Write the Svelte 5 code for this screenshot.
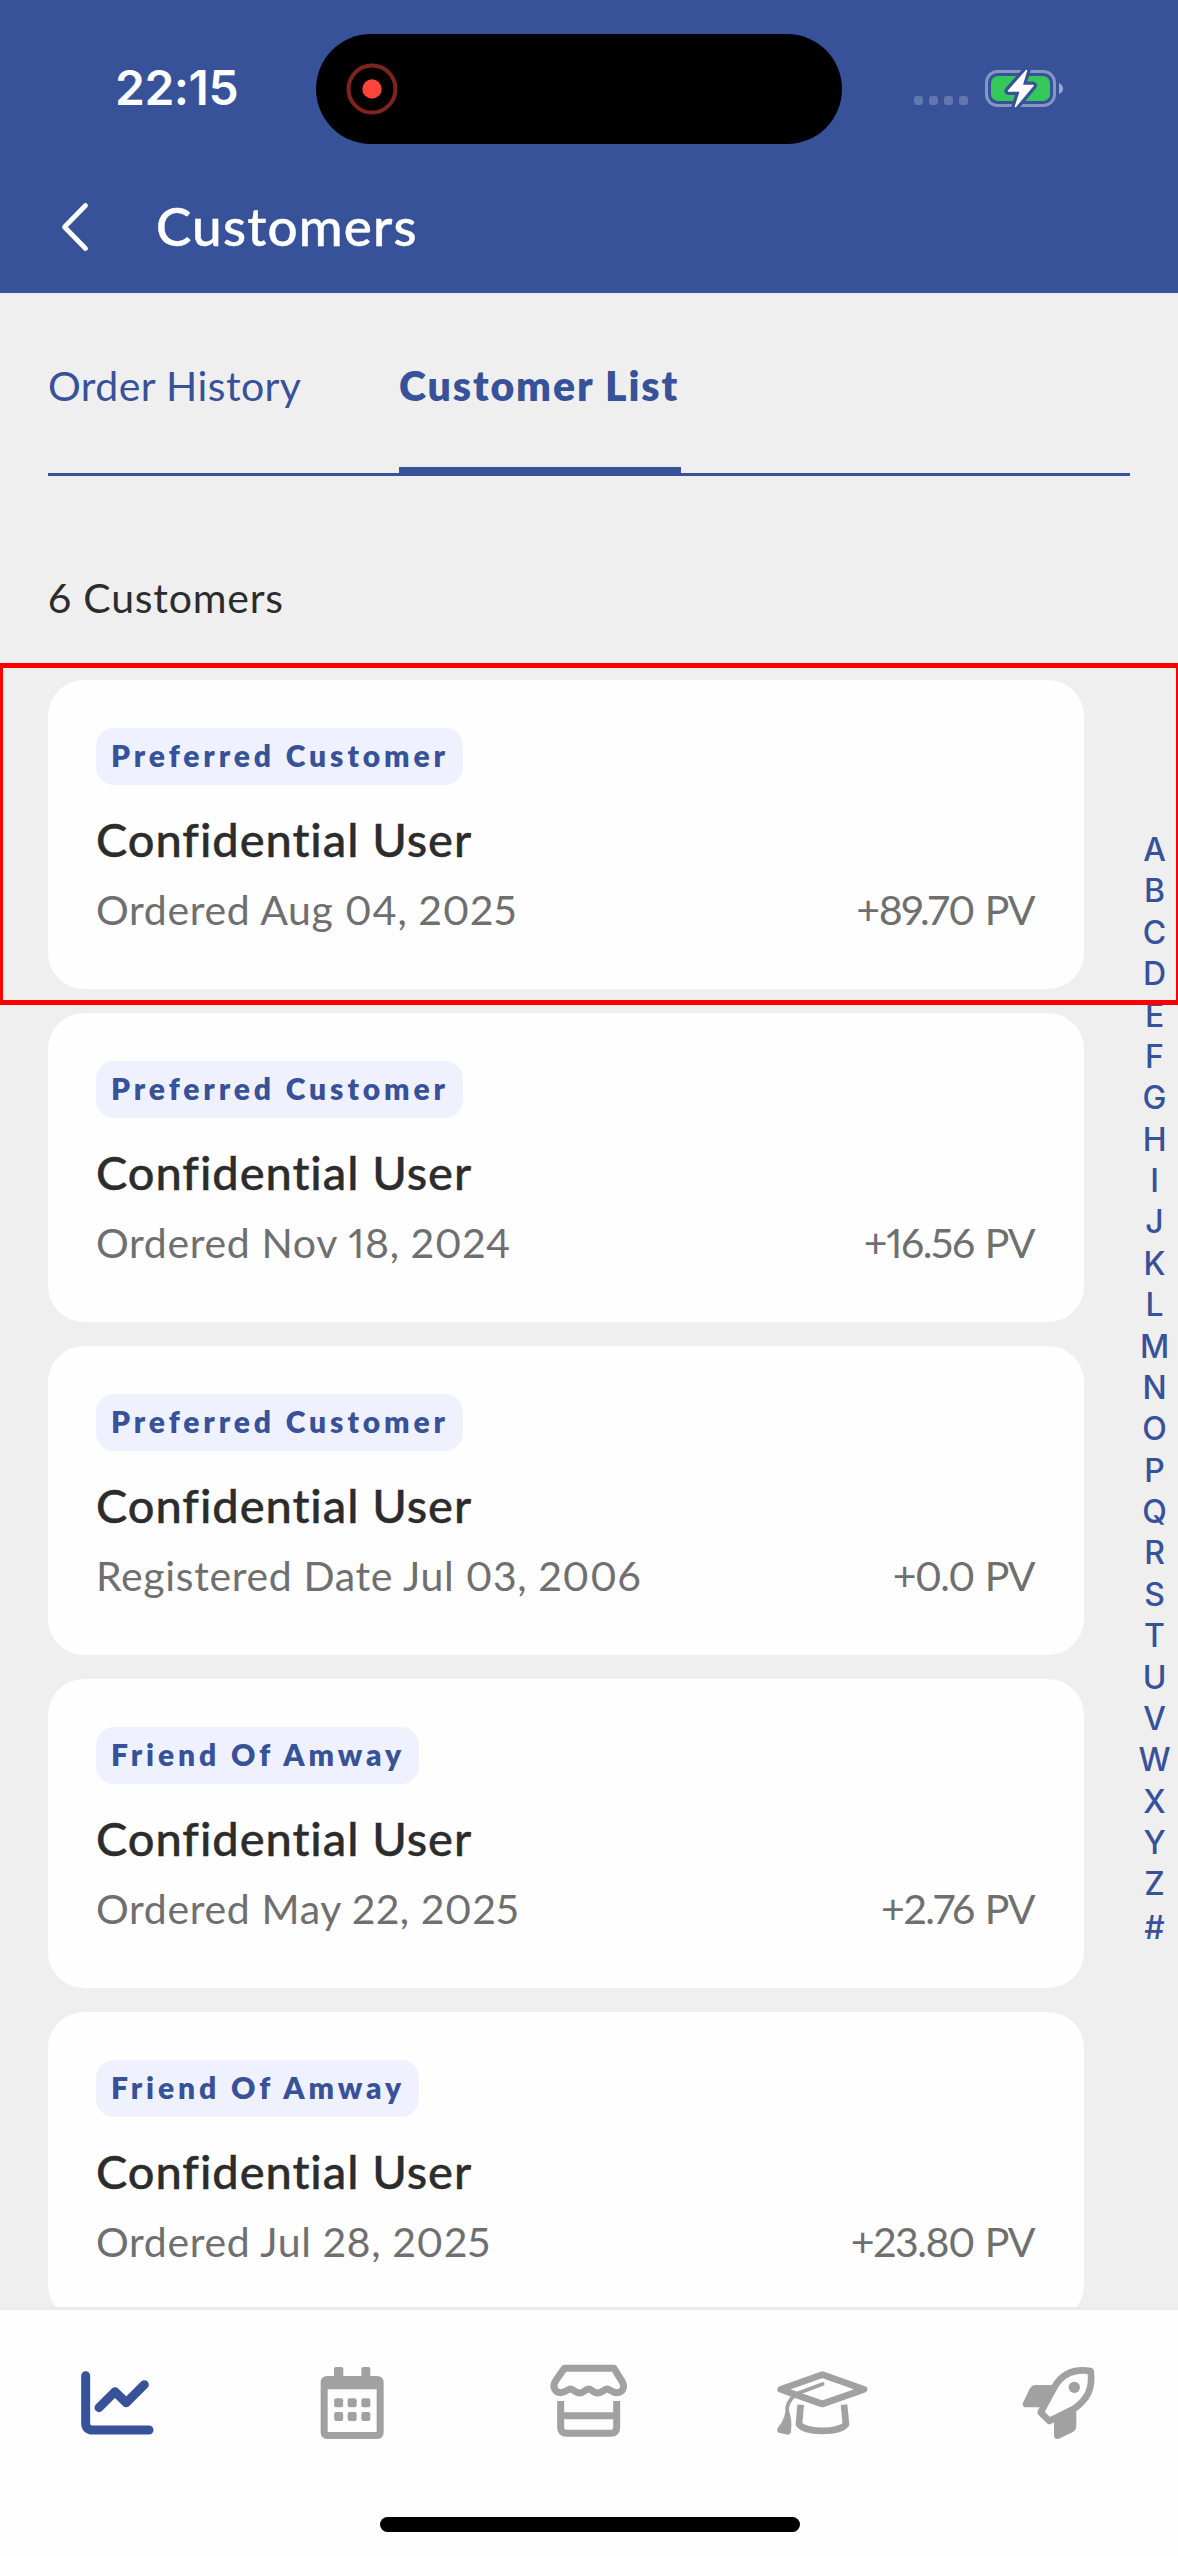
<script>
  const customers = [
    { type: 'Preferred Customer', name: 'Confidential User', date: 'Ordered Aug 04, 2025', pv: '+89.70 PV' },
    { type: 'Preferred Customer', name: 'Confidential User', date: 'Ordered Nov 18, 2024', pv: '+16.56 PV' },
    { type: 'Preferred Customer', name: 'Confidential User', date: 'Registered Date Jul 03, 2006', pv: '+0.0 PV' },
    { type: 'Friend Of Amway', name: 'Confidential User', date: 'Ordered May 22, 2025', pv: '+2.76 PV' },
    { type: 'Friend Of Amway', name: 'Confidential User', date: 'Ordered Jul 28, 2025', pv: '+23.80 PV' }
  ];
  const letters = [...'ABCDEFGHIJKLMNOPQRSTUVWXYZ#'];
</script>

<div class="screen">
  <header>
    <div class="status">
      <span class="time">22:15</span>
      <div class="island">
        <svg width="52" height="52" viewBox="0 0 52 52">
          <circle cx="26" cy="26" r="23.5" fill="none" stroke="#7f231e" stroke-width="4" />
          <circle cx="26" cy="26" r="9.7" fill="#ff453a" />
        </svg>
      </div>
      <div class="indicators">
        <span class="dots"><i></i><i></i><i></i><i></i></span>
        <svg width="80" height="42" viewBox="0 0 80 42">
          <rect x="1.5" y="4.5" width="68" height="34" rx="11" fill="none" stroke="#8796c5" stroke-width="3" />
          <rect x="6" y="9" width="59" height="25" rx="7" fill="#34c759" />
          <path d="M74 16 Q78 18 78 21.500 Q78 25 74 27 Z" fill="#9aa8d2" />
          <path d="M41.500 3.500 L23.500 24 H35.500 L30.500 39.500 L48 18.500 H37 Z" fill="#fff" stroke="#385299" stroke-width="8" stroke-linejoin="round" />
          <path d="M41.500 3.500 L23.500 24 H35.500 L30.500 39.500 L48 18.500 H37 Z" fill="#fff" stroke="#fff" stroke-width="1.500" stroke-linejoin="round" />
        </svg>
      </div>
    </div>
    <div class="title-row">
      <svg width="30" height="52" viewBox="0 0 30 52">
        <path d="M25.500 4.500 L4.500 26 L25.500 47.500" fill="none" stroke="#fff" stroke-width="4.800" stroke-linecap="round" stroke-linejoin="round" />
      </svg>
      <h1>Customers</h1>
    </div>
  </header>

  <nav class="tabs">
    <span class="tab">Order History</span>
    <span class="tab active">Customer List</span>
  </nav>

  <main>
    <p class="count">6 Customers</p>
    <div class="content">
      <div class="list">
        {#each customers as c}
          <article class="card">
            <span class="badge">{c.type}</span>
            <h2>{c.name}</h2>
            <div class="meta"><span class="date">{c.date}</span><span class="pv">{c.pv}</span></div>
          </article>
        {/each}
      </div>
      <div class="index">
        {#each letters as l}<span class:hash={l === '#'}>{l}</span>{/each}
      </div>
      <div class="highlight"></div>
    </div>
  </main>

  <footer>
    <div class="icons">
      <div class="cell">
        <svg viewBox="191 207 324 324" fill="none" stroke="#385299" stroke-width="27" stroke-linecap="round" stroke-linejoin="round">
          <path d="M256 287 V429 Q256 450 277 450 H446" />
          <path d="M296 383 L344 335 L378 368 L432 314" />
        </svg>
      </div>
      <div class="cell">
        <svg viewBox="898 207 324 324" fill="#a1a1a1">
          <path fill-rule="evenodd" d="M983 288 H1132 Q1152 288 1152 308 V457 Q1152 477 1132 477 H983 Q963 477 963 457 V308 Q963 288 983 288 Z M984 328 V456 H1131 V328 Z" />
          <rect x="1003" y="261" width="28" height="40" rx="6" />
          <rect x="1085" y="261" width="27" height="40" rx="6" />
          {#each [355, 396] as y}
            {#each [1003.5, 1044, 1085] as x}
              <rect {x} {y} width="27" height="27" rx="6" />
            {/each}
          {/each}
        </svg>
      </div>
      <div class="cell">
        <svg viewBox="345 207 324 324" fill="none" stroke="#a1a1a1" stroke-width="21" stroke-linejoin="round">
          <path d="M433 265 H582 L606 304 C617 322 607 338 591 338 C576 338 570 327 561 327 C553 327 546 339 533 339 C520 339 514 327 506 327 C498 327 491 339 479 339 C466 339 459 327 451 327 C443 327 437 338 422 338 C405 338 396 320 406 304 Z" />
          <path d="M422 363 V442 Q422 460 440 460 H573 Q590 460 590 442 V363 M422 407 H590" />
        </svg>
      </div>
      <div class="cell">
        <svg viewBox="92 207 324 324" fill="none" stroke="#a1a1a1" stroke-width="20" stroke-linejoin="round">
          <path d="M246 284 L371 328 L246 372 L121 328 Z" />
          <path d="M181 374 L176 433 C195 459 298 459 317 433 L311 374" />
          <path d="M247 312 L165 343 Q136 370 141 396" stroke-width="11" stroke-linecap="round" />
          <path d="M135 396 Q131 422 112 444 Q107 457 119 459 L143 464 Q151 464 152 454 Q156 420 146 392 Z" fill="#a1a1a1" stroke="none" />
        </svg>
      </div>
      <div class="cell">
        <svg viewBox="799 207 324 324" fill="#a1a1a1">
          <path d="M940 315 H886 Q876 316 870 326 L850 368 Q846 382 860 382 H905 Z" />
          <path d="M943 420 V466 Q944 480 958 476 L998 457 Q1010 450 1010 438 V386 Z" />
          <path d="M1053 273 C1000 265 965 285 945 320 L903 397 L929 423 L1003 386 C1044 358 1060 325 1053 273 Z" fill="#fefefe" stroke="#a1a1a1" stroke-width="20" stroke-linejoin="round" />
          <circle cx="1004" cy="322" r="17" />
        </svg>
      </div>
    </div>
    <div class="home"></div>
  </footer>
</div>

<style>
  :global(body) { margin: 0; }
  .screen {
    width: 1178px;
    height: 2556px;
    display: flex;
    flex-direction: column;
    overflow: hidden;
    background: #efefef;
    font-family: Lato, "Liberation Sans", sans-serif;
    font-variant-numeric: proportional-nums;
    font-variant-ligatures: none;
    color: #2c2c2c;
  }
  header { height: 293px; flex: none; background: #385299; color: #fff; }
  .status {
    height: 178px;
    display: grid;
    grid-template-columns: 316px 526px 1fr;
    align-items: center;
    box-sizing: border-box;
  }
  .time {
    padding-left: 115px;
    margin-top: -2px;
    font: 600 48px/56px Inter, sans-serif;
    letter-spacing: -0.5px;
  }
  .island {
    height: 110px;
    border-radius: 55px;
    background: #000;
    display: flex;
    align-items: center;
    padding-left: 30px;
    box-sizing: border-box;
  }
  .indicators { display: flex; align-items: center; padding-left: 72px; gap: 17px; }
  .indicators svg { display: block; margin-top: -3px; }
  .dots { display: flex; gap: 6px; padding-top: 22px; }
  .dots i { width: 9px; height: 9px; border-radius: 3px; background: #6177ae; }
  .title-row { display: flex; align-items: center; gap: 66px; padding-left: 60px; height: 98px; }
  h1 {
    margin: -2px 0 0;
    font-size: 53px;
    line-height: 60px;
    font-weight: 500;
    letter-spacing: 1.2px;
    -webkit-text-stroke: 0.5px currentColor;
  }

  .tabs {
    display: flex;
    flex: none;
    gap: 97px;
    margin: 0 48px;
    height: 183px;
    box-sizing: border-box;
    border-bottom: 3px solid #385299;
    color: #385299;
    font-size: 41px;
    line-height: 48px;
  }
  .tab { box-sizing: border-box; width: 254px; height: 183px; padding-top: 69px; white-space: nowrap; letter-spacing: 0.4px; }
  .tab.active { width: 282px; font-weight: 800; border-bottom: 9px solid #385299; letter-spacing: 1.9px; }

  main { flex: 1; min-height: 0; overflow: hidden; padding-left: 48px; }
  .count { margin: 98px 0 58px; font-size: 41px; line-height: 48px; letter-spacing: 0.8px; }
  .content { display: flex; position: relative; height: 1627px; }
  .list { width: 1038px; display: flex; flex-direction: column; gap: 24px; }
  .card {
    flex: none;
    box-sizing: border-box;
    height: 309px;
    padding: 48px 50px 0 48px;
    border-radius: 36px;
    background: #fefefe;
  }
  .badge {
    display: block;
    width: fit-content;
    height: 57px;
    padding: 0 14px 0 15px;
    border-radius: 18px;
    background: #eff1fe;
    color: #385299;
    font-size: 30px;
    line-height: 54px;
    font-weight: 800;
    letter-spacing: 3.9px;
  }
  h2 {
    margin: 26px 0 19px;
    font-size: 47px;
    line-height: 56px;
    font-weight: 500;
    letter-spacing: 0.95px;
    -webkit-text-stroke: 0.4px currentColor;
  }
  .meta {
    display: flex;
    justify-content: space-between;
    font-size: 41px;
    line-height: 48px;
    color: #6f6f6f;
  }
  .date { letter-spacing: 0.65px; }
  .pv { letter-spacing: -1.4px; word-spacing: 2px; }
  .index {
    margin: 149px 0 0 47px;
    width: 47px;
    display: flex;
    flex-direction: column;
    align-items: center;
    font: 550 32px/41.38px Inter, sans-serif;
    color: #385299;
  }
  .hash { padding-top: 2px; }
  .highlight {
    position: absolute;
    left: -48px;
    top: -17px;
    width: 1178px;
    height: 342px;
    box-sizing: border-box;
    border: solid #f00;
    border-width: 5px 2px 5px 3px;
  }

  footer {
    flex: none;
    height: 249px;
    box-sizing: border-box;
    border-top: 3px solid #ececec;
    background: #fefefe;
    display: flex;
    flex-direction: column;
    align-items: center;
  }
  .icons { display: flex; width: 100%; padding-top: 39px; }
  .cell { flex: 1; display: flex; justify-content: center; }
  .cell svg { width: 108px; height: 108px; display: block; }
  .home { width: 420px; height: 15px; border-radius: 8px; background: #000; margin: 60px 0 0 2px; }
</style>
